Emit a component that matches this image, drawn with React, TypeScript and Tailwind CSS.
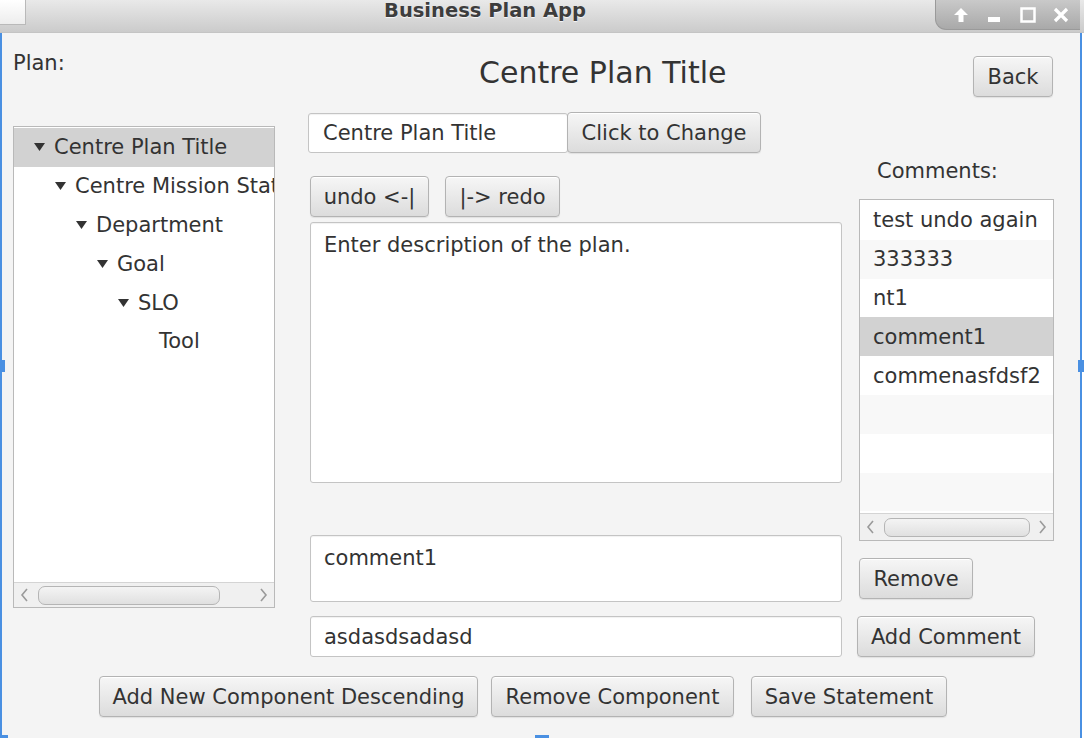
import type { ReactNode } from "react";
import clsx from "clsx";

const FONT = { fontFamily: '"DejaVu Sans", Verdana, sans-serif' };

function Btn({ children, className }: { children: ReactNode; className?: string }) {
  return (
    <button
      className={clsx(
        "flex h-[41px] shrink-0 items-center justify-center rounded-[4px] border border-[#b3b3b3] bg-linear-to-b from-[#f6f6f6] to-[#dcdcdc] text-[21px] leading-[24px] text-[#333] shadow-[inset_0_1px_0_#ffffff,0_1px_1px_rgba(0,0,0,0.08)]",
        className
      )}
    >
      {children}
    </button>
  );
}

function Field({ children, className }: { children?: ReactNode; className?: string }) {
  return (
    <div
      className={clsx(
        "shrink-0 rounded-[3px] border border-[#c4c4c4] bg-white text-[21px] leading-[24px] text-[#333] shadow-[inset_0_1px_1px_rgba(0,0,0,0.06)]",
        className
      )}
    >
      {children}
    </div>
  );
}

function Chevron({ dir }: { dir: "l" | "r" }) {
  return (
    <svg width="9" height="14" viewBox="0 0 9 14" className="shrink-0">
      <path
        d={dir === "l" ? "M7 1 L2 7 L7 13" : "M2 1 L7 7 L2 13"}
        fill="none"
        stroke="#9a9a9a"
        strokeWidth="1.6"
      />
    </svg>
  );
}

function HScroll({ thumb, className }: { thumb: string; className?: string }) {
  return (
    <div
      className={clsx(
        "flex h-[25px] shrink-0 items-center border-t border-[#d4d4d4] bg-[#f0f0f0] px-[6px]",
        className
      )}
    >
      <Chevron dir="l" />
      <div
        className={clsx(
          "ml-[9px] h-[19px] rounded-[7px] border border-[#b5b5b5] bg-linear-to-b from-[#f4f4f4] to-[#e0e0e0]",
          thumb
        )}
      />
      <div className="flex-1" />
      <Chevron dir="r" />
    </div>
  );
}

const TREE = [
  { label: "Centre Plan Title", level: 0, arrow: true, selected: true },
  { label: "Centre Mission Statement", level: 1, arrow: true },
  { label: "Department", level: 2, arrow: true },
  { label: "Goal", level: 3, arrow: true },
  { label: "SLO", level: 4, arrow: true },
  { label: "Tool", level: 5, arrow: false },
];

const INDENT = ["pl-[20px]", "pl-[41px]", "pl-[62px]", "pl-[83px]", "pl-[104px]", "pl-[125px]"];

const COMMENTS = [
  "test undo again",
  "333333",
  "nt1",
  "comment1",
  "commenasfdsf2",
  "",
  "",
  "",
];

export default function App() {
  return (
    <div style={FONT} className="relative h-[738px] w-[1084px] overflow-hidden bg-white text-[#333]">
      {/* title bar */}
      <div className="relative flex h-[33px] items-start justify-center border-b border-[#c4c4c4] bg-linear-to-b from-[#e9e9e9] to-[#cbcbcb] pr-[114px]">
        <div className="absolute left-0 top-0 h-[25px] w-[26px] border-b border-r border-[#b9b9b9] bg-linear-to-b from-white to-[#ededed]" />
        <span className="text-[19.5px] font-bold leading-[22px] text-[#3d3d3d] [text-shadow:0_1px_1px_rgba(255,255,255,0.8)]">
          Business Plan App
        </span>
        <div className="absolute right-[4px] top-0 flex h-[30px] w-[145px] items-center justify-around rounded-bl-[11px] border-b border-l border-[#9a9a9a] bg-linear-to-b from-[#c9c9c9] to-[#a9a9a9] pl-[8px] pr-[2px]">
          <svg width="16" height="16" viewBox="0 0 16 16">
            <path d="M8 1 L15 8 L10.5 8 L10.5 15 L5.5 15 L5.5 8 L1 8 Z" fill="#ffffff" />
          </svg>
          <svg width="16" height="16" viewBox="0 0 16 16">
            <rect x="2" y="10" width="12" height="5" fill="#ffffff" />
          </svg>
          <svg width="16" height="16" viewBox="0 0 16 16">
            <rect x="1.5" y="1.5" width="13" height="13" fill="none" stroke="#ffffff" strokeWidth="2.5" />
          </svg>
          <svg width="16" height="16" viewBox="0 0 16 16">
            <path d="M2 2 L14 14 M14 2 L2 14" stroke="#ffffff" strokeWidth="3.2" />
          </svg>
        </div>
      </div>

      {/* window body */}
      <div className="flex h-[705px] w-[1082px] flex-col border-l-2 border-r-2 border-[#4a90e2] bg-[#f4f4f4]">
        <div className="flex items-start">
          {/* left column */}
          <div className="ml-[11px] flex w-[262px] flex-col">
            <div className="mt-[18px] text-[21px] leading-[24px]">Plan:</div>
            <div className="mt-[51px] flex h-[482px] flex-col overflow-hidden border border-[#b9b9b9] bg-white">
              <div className="flex-1 pt-[1px]">
                {TREE.map((t) => (
                  <div
                    key={t.label}
                    className={clsx(
                      "flex h-[38.8px] items-center whitespace-nowrap text-[21px] leading-[24px]",
                      INDENT[t.level],
                      t.selected && "bg-[#d2d2d2]"
                    )}
                  >
                    <span className="flex w-[20px] shrink-0 items-center">
                      {t.arrow && (
                        <svg width="11" height="8" viewBox="0 0 11 8">
                          <path d="M0 0 L11 0 L5.5 8 Z" fill="#333333" />
                        </svg>
                      )}
                    </span>
                    <span>{t.label}</span>
                  </div>
                ))}
              </div>
              <HScroll thumb="w-[182px]" />
            </div>
          </div>

          {/* middle column */}
          <div className="ml-[33px] flex w-[534px] flex-col">
            <div className="mt-[22px] pl-[171px] text-[30px] leading-[36px] whitespace-nowrap">Centre Plan Title</div>
            <div className="mt-[21px] flex items-start">
              <Field className="mt-[1px] flex h-[40px] w-[260px] items-center pl-[14px]">Centre Plan Title</Field>
              <Btn className="-ml-px w-[194px]">Click to Change</Btn>
            </div>
            <div className="mt-[23px] ml-[2px] flex gap-[16px]">
              <Btn className="h-[40px] w-[119px]">undo &lt;-|</Btn>
              <Btn className="h-[40px] w-[115px]">|-&gt; redo</Btn>
            </div>
            <Field className="mt-[5px] ml-[2px] h-[261px] w-[532px] pl-[13px] pt-[10px]">
              Enter description of the plan.
            </Field>
            <Field className="mt-[52px] ml-[2px] h-[67px] w-[532px] pl-[13px] pt-[10px]">comment1</Field>
            <Field className="mt-[14px] ml-[2px] flex h-[41px] w-[532px] items-center pl-[13px]">asdasdsadasd</Field>
          </div>

          {/* right column */}
          <div className="ml-[15px] flex w-[197px] flex-col">
            <Btn className="mt-[23px] ml-[116px] h-[40px] w-[80px]">Back</Btn>
            <div className="mt-[62px] ml-[20px] text-[21px] leading-[24px]">Comments:</div>
            <div className="mt-[16px] ml-[2px] flex h-[342px] w-[195px] flex-col overflow-hidden border border-[#b9b9b9] bg-white">
              <div className="flex-1 pt-[1px]">
                {COMMENTS.map((c, i) => (
                  <div
                    key={i}
                    className={clsx(
                      "flex h-[38.8px] items-center whitespace-nowrap pl-[13px] text-[21px] leading-[24px]",
                      i === 3 ? "bg-[#d2d2d2]" : i % 2 === 1 ? "bg-[#f8f8f8]" : "bg-white"
                    )}
                  >
                    {c}
                  </div>
                ))}
              </div>
              <HScroll thumb="w-[146px]" className="h-[27px]" />
            </div>
            <Btn className="mt-[17px] ml-[2px] w-[114px]">Remove</Btn>
            <Btn className="mt-[17px] w-[178px]">Add Comment</Btn>
          </div>
        </div>

        {/* bottom action row */}
        <div className="mt-[19px] ml-[97px] flex">
          <Btn className="h-[40px] w-[379px]">Add New Component Descending</Btn>
          <Btn className="ml-[13px] h-[40px] w-[243px]">Remove Component</Btn>
          <Btn className="ml-[17px] h-[40px] w-[196px]">Save Statement</Btn>
        </div>
      </div>

      {/* resize handles */}
      <div className="absolute left-0 top-[360px] h-[12px] w-[5px] bg-[#4a90e2]" />
      <div className="absolute right-0 top-[360px] h-[12px] w-[6px] bg-[#4a90e2]" />
      <div className="absolute bottom-0 left-[535px] h-[3px] w-[14px] bg-[#4a90e2]" />
      <div className="absolute bottom-0 left-0 h-[3px] w-[8px] bg-[#4a90e2]" />
    </div>
  );
}
